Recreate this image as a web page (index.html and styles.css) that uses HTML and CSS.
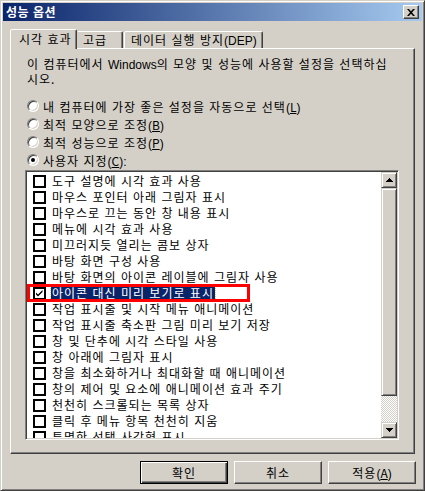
FILE: index.html
```html
<!DOCTYPE html>
<html lang="ko">
<head>
    <meta charset="UTF-8">
    <title>성능 옵션</title>
    <link rel="stylesheet" href="styles.css">
</head>
<body>
    <div class="window">
        <div class="titlebar">
            <span class="title">성능 옵션</span>
            <span class="close">
                <svg width="8" height="7" viewBox="0 0 8 7"><path d="M0 0h2l2 2.3L6 0h2L5 3.5 8 7H6L4 4.7 2 7H0l3-3.5z" fill="#000"/></svg>
            </span>
        </div>
        <div class="client">
            <div class="tabs">
                <div class="tab tab-active">시각 효과</div>
                <div class="tab tab-adv">고급</div>
                <div class="tab tab-dep">데이터 실행 방지<span class="latin">(DEP)</span></div>
            </div>
            <div class="panel">
                <p class="desc">이 컴퓨터에서 <span class="latin">Windows</span>의 모양 및 성능에 사용할 설정을 선택하십<br>시오.</p>
                <div class="options">
                    <div class="option"><span class="radio"></span>내 컴퓨터에 가장 좋은 설정을 자동으로 선택<span class="latin">(<u>L</u>)</span></div>
                    <div class="option"><span class="radio"></span>최적 모양으로 조정<span class="latin">(<u>B</u>)</span></div>
                    <div class="option"><span class="radio"></span>최적 성능으로 조정<span class="latin">(<u>P</u>)</span></div>
                    <div class="option"><span class="radio radio-on"></span>사용자 지정<span class="latin">(<u>C</u>):</span></div>
                </div>
                <div class="listbox">
                    <ul class="items">
                        <li class="item"><span class="check"></span><span class="label">도구 설명에 시각 효과 사용</span></li>
                        <li class="item"><span class="check"></span><span class="label">마우스 포인터 아래 그림자 표시</span></li>
                        <li class="item"><span class="check"></span><span class="label">마우스로 끄는 동안 창 내용 표시</span></li>
                        <li class="item"><span class="check"></span><span class="label">메뉴에 시각 효과 사용</span></li>
                        <li class="item"><span class="check"></span><span class="label">미끄러지듯 열리는 콤보 상자</span></li>
                        <li class="item"><span class="check"></span><span class="label">바탕 화면 구성 사용</span></li>
                        <li class="item"><span class="check"></span><span class="label">바탕 화면의 아이콘 레이블에 그림자 사용</span></li>
                        <li class="item item-selected">
                            <span class="check"><svg width="9" height="9" viewBox="0 0 9 9"><path d="M1 3.5l2 2 4.5-4.5v2L3 7.5l-2-2z" fill="#000"/></svg></span><span class="label">아이콘 대신 미리 보기로 표시</span>
                            <span class="mark"></span>
                        </li>
                        <li class="item"><span class="check"></span><span class="label">작업 표시줄 및 시작 메뉴 애니메이션</span></li>
                        <li class="item"><span class="check"></span><span class="label">작업 표시줄 축소판 그림 미리 보기 저장</span></li>
                        <li class="item"><span class="check"></span><span class="label">창 및 단추에 시각 스타일 사용</span></li>
                        <li class="item"><span class="check"></span><span class="label">창 아래에 그림자 표시</span></li>
                        <li class="item"><span class="check"></span><span class="label">창을 최소화하거나 최대화할 때 애니메이션</span></li>
                        <li class="item"><span class="check"></span><span class="label">창의 제어 및 요소에 애니메이션 효과 주기</span></li>
                        <li class="item"><span class="check"></span><span class="label">천천히 스크롤되는 목록 상자</span></li>
                        <li class="item"><span class="check"></span><span class="label">클릭 후 메뉴 항목 천천히 지움</span></li>
                        <li class="item"><span class="check"></span><span class="label">투명한 선택 사각형 표시</span></li>
                    </ul>
                    <div class="scrollbar">
                        <span class="sb-btn"><svg width="7" height="4" viewBox="0 0 7 4" shape-rendering="crispEdges"><path d="M3 0h1v1h1v1h1v1h1v1H0V3h1V2h1V1h1z" fill="#000"/></svg></span>
                        <span class="sb-thumb"></span>
                        <span class="sb-track"></span>
                        <span class="sb-btn"><svg width="7" height="4" viewBox="0 0 7 4" shape-rendering="crispEdges"><path d="M0 0h7v1H6v1H5v1H4v1H3V3H2V2H1V1H0z" fill="#000"/></svg></span>
                    </div>
                </div>
            </div>
            <div class="buttons">
                <button class="btn btn-default">확인</button>
                <button class="btn">취소</button>
                <button class="btn">적용<span class="latin">(<u>A</u>)</span></button>
            </div>
        </div>
    </div>
</body>
</html>
```

FILE: styles.css
```css
* {
    margin: 0;
    padding: 0;
    box-sizing: border-box;
    font-family: "Noto Sans CJK KR", "Noto Sans", sans-serif;
}
body {
    background: #d4d0c8;
    font-size: 12px;
    letter-spacing: 1px;
    color: #000;
}
.latin {
    font-family: "Liberation Sans", "Noto Sans CJK KR", sans-serif;
    letter-spacing: 0;
}
.window {
    width: 425px;
    height: 491px;
    padding: 2px;
    background: #d4d0c8;
    border: 1px solid;
    border-color: #d4d0c8 #404040 #404040 #d4d0c8;
    box-shadow: inset 1px 1px #fff, inset -1px -1px #808080;
}
.titlebar {
    height: 18px;
    display: flex;
    align-items: center;
    justify-content: space-between;
    padding: 0 3px 0 3px;
    background: linear-gradient(to right, #0a246a, #a6caf0);
}
.title {
    color: #fff;
    font-weight: bold;
    line-height: 18px;
    letter-spacing: 0.5px;
}
.close {
    width: 16px;
    height: 14px;
    display: flex;
    align-items: center;
    justify-content: center;
    background: #d4d0c8;
    border: 1px solid;
    border-color: #fff #404040 #404040 #fff;
    box-shadow: inset -1px -1px #808080;
}
.client {
    padding: 8px 7px 0 7px;
}

/* tabs */
.tabs {
    display: flex;
    align-items: flex-end;
    height: 19px;
    position: relative;
    z-index: 1;
}
.tab {
    height: 17px;
    line-height: 16px;
    background: #d4d0c8;
    border: 1px solid;
    border-bottom: none;
    border-color: #fff #404040 transparent #fff;
    box-shadow: inset -1px 0 #808080;
    border-radius: 2px 2px 0 0;
    white-space: nowrap;
}
.tab-active {
    width: 67px;
    height: 20px;
    line-height: 17px;
    margin-bottom: -1px;
    padding-left: 8px;
}
.tab-adv {
    width: 46px;
    padding-left: 5px;
    border-left-color: transparent;
}
.tab-dep {
    width: 139px;
    margin-left: 1px;
    padding-left: 6px;
}
.panel {
    height: 406px;
    padding: 8px 14px 0 14px;
    border: 1px solid;
    border-color: #fff #404040 #404040 #fff;
    box-shadow: inset -1px -1px #808080;
}
.desc {
    margin-left: 2px;
    line-height: 14px;
    white-space: nowrap;
}

/* radio buttons */
.options {
    margin: 11px 0 0 2px;
}
.option {
    display: flex;
    align-items: center;
    gap: 4px;
    height: 18px;
}
.radio {
    width: 12px;
    height: 12px;
    flex: none;
    margin-right: 0;
    position: relative;
    border-radius: 50%;
    background: #fff;
    border: 1px solid;
    border-color: #808080 #fff #fff #808080;
    box-shadow: inset 1px 1px #404040, inset -1px -1px #d4d0c8;
}
.option .latin {
    margin-left: -4px;
}
.radio-on::after {
    content: "";
    position: absolute;
    left: 3px;
    top: 3px;
    width: 4px;
    height: 4px;
    border-radius: 50%;
    background: #000;
}

/* list */
.listbox {
    width: 374px;
    height: 270px;
    margin-top: 1px;
    display: flex;
    padding: 1px;
    background: #fff;
    border: 1px solid;
    border-color: #808080 #fff #fff #808080;
    box-shadow: inset 1px 1px #404040, inset -1px -1px #d4d0c8;
}
.items {
    flex: 1;
    list-style: none;
    padding-top: 1px;
    overflow: hidden;
}
.item {
    height: 16px;
    display: flex;
    align-items: center;
    padding-left: 6px;
    position: relative;
    white-space: nowrap;
}
.check {
    width: 13px;
    height: 13px;
    flex: none;
    margin-right: 5px;
    display: flex;
    align-items: center;
    justify-content: center;
    background: #fff;
    border: 2px solid #000;
}
.label {
    padding: 0 1px;
    line-height: 14px;
}
.item-selected .label {
    background: #0a246a;
    color: #fff;
    outline: 1px dotted #d8cf8c;
}
.mark {
    position: absolute;
    left: 0;
    top: -1px;
    width: 223px;
    height: 18px;
    border: 3px solid #f00;
}

/* scrollbar */
.scrollbar {
    width: 16px;
    flex: none;
    display: flex;
    flex-direction: column;
}
.sb-btn,
.sb-thumb {
    background: #d4d0c8;
    border: 1px solid;
    border-color: #d4d0c8 #404040 #404040 #d4d0c8;
    box-shadow: inset 1px 1px #fff, inset -1px -1px #808080;
}
.sb-btn {
    height: 16px;
    display: flex;
    align-items: center;
    justify-content: center;
}
.sb-thumb {
    height: 208px;
}
.sb-track {
    flex: 1;
    background: repeating-conic-gradient(#d4d0c8 0 25%, #fff 0 50%) 0 0 / 2px 2px;
}

/* buttons */
.buttons {
    display: flex;
    justify-content: flex-end;
    gap: 6px;
    margin: 7px -1px 0 0;
}
.btn {
    width: 88px;
    height: 23px;
    font-size: 12px;
    letter-spacing: 1px;
    color: #000;
    background: #d4d0c8;
    border: 1px solid;
    border-color: #fff #404040 #404040 #fff;
    box-shadow: inset -1px -1px #808080;
}
.btn-default {
    border-color: #000;
    box-shadow: inset 1px 1px #fff, inset -1px -1px #404040, inset -2px -2px #808080;
}
```
